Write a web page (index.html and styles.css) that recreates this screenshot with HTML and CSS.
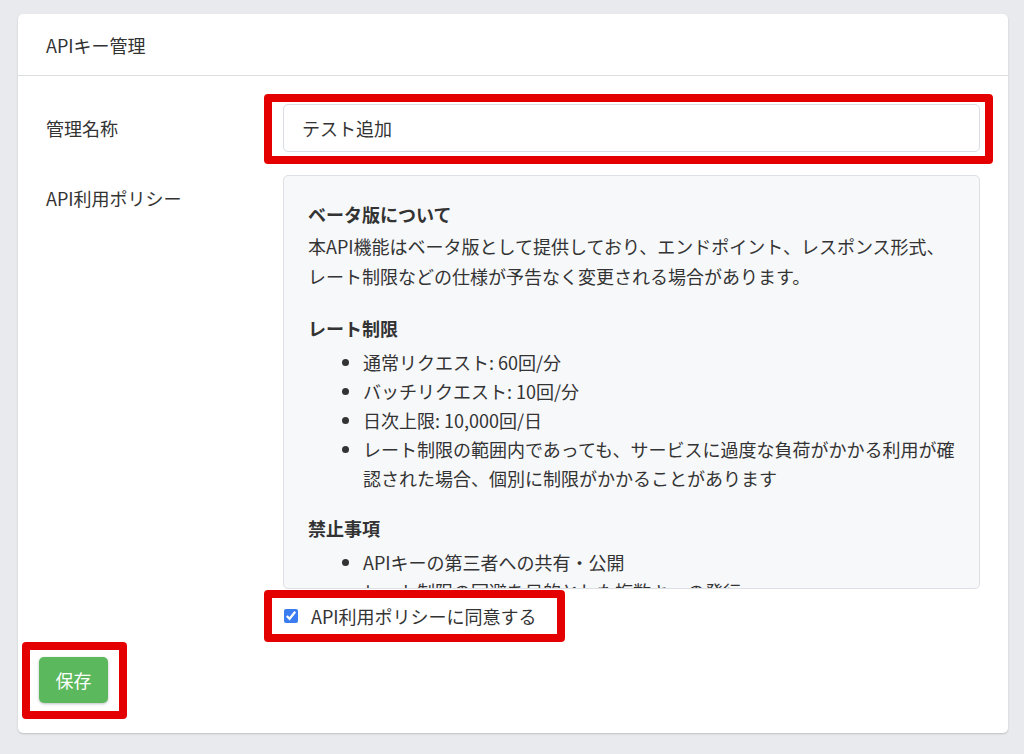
FILE: index.html
```html
<!DOCTYPE html>
<html lang="ja">
<head>
<meta charset="utf-8">
<title>APIキー管理</title>
<link rel="stylesheet" href="styles.css">
</head>
<body>
<div class="card">
  <div class="card-header">APIキー管理</div>
  <div class="card-body">
    <div class="form-row">
      <label class="form-label">管理名称</label>
      <div class="form-field">
        <div class="highlight-wrap">
          <input class="text-input" type="text" value="テスト追加">
          <span class="highlight hl-input"></span>
        </div>
      </div>
    </div>
    <div class="form-row">
      <label class="form-label">API利用ポリシー</label>
      <div class="form-field">
        <div class="policy">
          <h4 class="policy-title">ベータ版について</h4>
          <p class="policy-text">本API機能はベータ版として提供しており、エンドポイント、レスポンス形式、レート制限などの仕様が予告なく変更される場合があります。</p>
          <h4 class="policy-title">レート制限</h4>
          <ul class="policy-list">
            <li>通常リクエスト: 60回/分</li>
            <li>バッチリクエスト: 10回/分</li>
            <li>日次上限: 10,000回/日</li>
            <li>レート制限の範囲内であっても、サービスに過度な負荷がかかる利用が確認された場合、個別に制限がかかることがあります</li>
          </ul>
          <h4 class="policy-title">禁止事項</h4>
          <ul class="policy-list">
            <li>APIキーの第三者への共有・公開</li>
            <li>レート制限の回避を目的とした複数キーの発行</li>
            <li>不正アクセスやサービス妨害を目的とした利用</li>
          </ul>
        </div>
        <div class="agree-row">
          <label class="agree highlight-wrap">
            <input class="agree-check" type="checkbox" checked>
            <span>API利用ポリシーに同意する</span>
            <span class="highlight hl-agree"></span>
          </label>
        </div>
      </div>
    </div>
    <div class="form-actions">
      <div class="highlight-wrap">
        <button class="btn-save" type="button">保存</button>
        <span class="highlight hl-btn"></span>
      </div>
    </div>
  </div>
</div>
</body>
</html>
```
FILE: styles.css
```css
html, body {
  margin: 0;
  padding: 0;
}
body {
  background: #e9eaed;
  font-family: "Noto Sans CJK JP", "Noto Sans", sans-serif;
  color: #333333;
  font-size: 18px;
  padding: 14px 16px 22px 18px;
}
.card {
  background: #ffffff;
  border-radius: 5px;
  box-shadow: 0 1px 2px rgba(0,0,0,0.18);
  width: 990px;
}
.card-header {
  height: 62px;
  box-sizing: border-box;
  padding: 0 28px;
  display: flex;
  align-items: center;
  border-bottom: 1px solid #dcdee2;
  font-size: 18px;
}
.card-body {
  padding: 28px 28px 30px 21px;
}
.form-row {
  display: flex;
  margin-bottom: 23px;
}
.form-row:nth-child(2) {
  margin-bottom: 0;
}
.form-label {
  width: 237px;
  flex: none;
  padding-left: 7px;
  line-height: 48px;
  margin-top: 0;
}
.form-row:nth-child(2) .form-label {
  line-height: 46px;
}
.form-field {
  flex: 1;
}
.highlight-wrap {
  position: relative;
}
.text-input {
  display: block;
  width: 100%;
  box-sizing: border-box;
  height: 48px;
  border: 1px solid #d9dce1;
  border-radius: 5px;
  padding: 0 18px;
  font-family: inherit;
  font-size: 18px;
  color: #333333;
  background: #ffffff;
  outline: none;
}
.highlight {
  position: absolute;
  border: 8px solid #e40000;
  border-radius: 4px;
  pointer-events: none;
}
.hl-input {
  top: -10px;
  left: -19px;
  right: -13px;
  bottom: -12px;
}
.policy {
  height: 414px;
  box-sizing: border-box;
  overflow: hidden;
  background: #f7f8fa;
  border: 1px solid #dcdfe3;
  border-radius: 5px;
  padding: 23px 24px;
  line-height: 30px;
}
.policy-title {
  margin: 0 0 2px;
  font-size: 18px;
  font-weight: 700;
  line-height: 30px;
}
.policy-text {
  margin: 0 0 22px;
}
.policy-list {
  margin: 5px 0 20px;
  padding-left: 55px;
}
.policy-list li {
  line-height: 29px;
}
.agree-row {
  display: flex;
  height: 54px;
  align-items: center;
}
.agree {
  display: flex;
  align-items: center;
  gap: 13px;
  padding-left: 1px;
  font-size: 18px;
}
.agree-check {
  width: 14px;
  height: 14px;
  margin: 0;
  accent-color: #3b7df0;
}
.hl-agree {
  top: -13px;
  left: -19px;
  right: -28px;
  bottom: -13px;
}
.form-actions {
  display: flex;
  padding-top: 14px;
}
.btn-save {
  display: block;
  height: 46px;
  width: 69px;
  border: none;
  border-radius: 5px;
  background: #5cb85c;
  color: #ffffff;
  font-family: inherit;
  font-size: 18px;
  box-shadow: 0 1px 3px rgba(0,0,0,0.25);
  padding: 0;
}
.hl-btn {
  top: -15px;
  left: -17px;
  right: -19px;
  bottom: -16px;
}
```
